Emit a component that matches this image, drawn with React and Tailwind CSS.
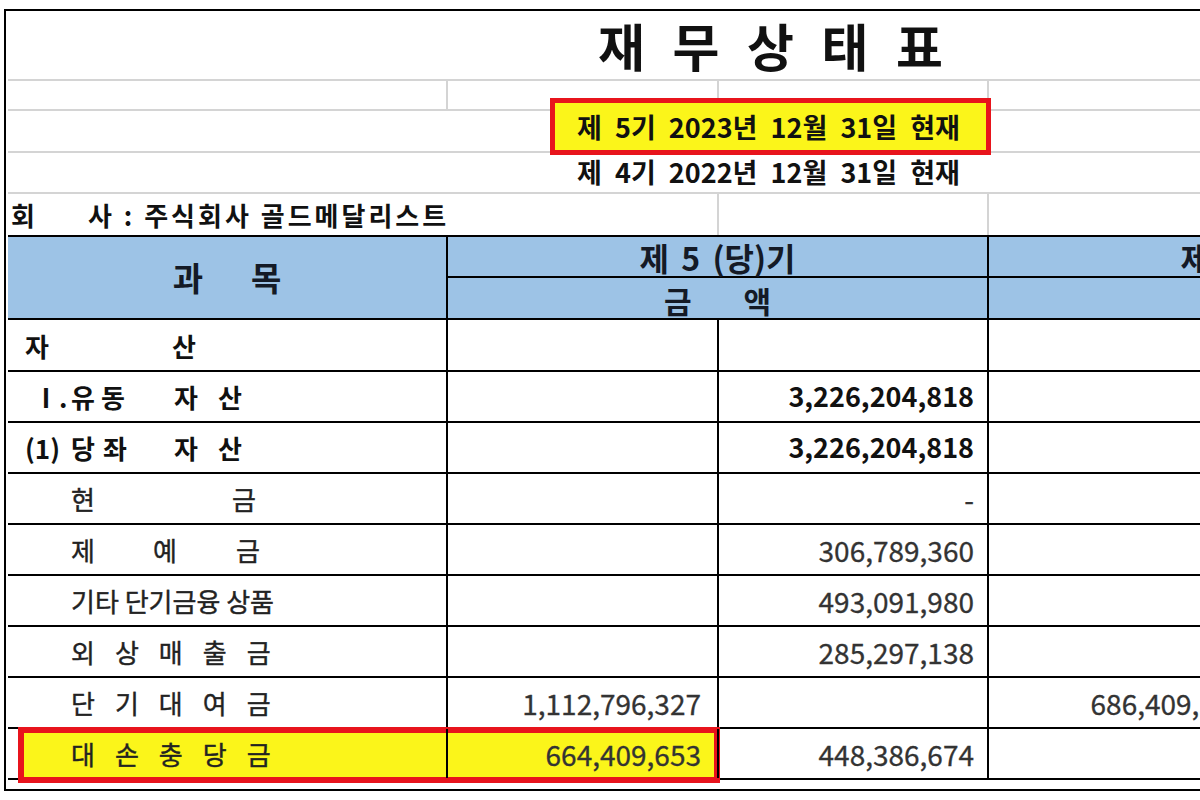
const kr = "font-['Noto_Sans_CJK_KR','Noto_Sans',sans-serif]";

function Label1({ children }) {
  return <span className="inline-flex items-center font-bold text-[26px] text-[#111]">{children}</span>;
}

function Label2({ children, className = "" }) {
  return (
    <span className={`inline-flex items-center text-[26px] text-[#222] [-webkit-text-stroke:0.4px_#222] ${className}`}>
      {children}
    </span>
  );
}

const rows = [
  {
    label: (
      <Label1>
        <span className="inline-block w-[147px]">자</span>
        <span>산</span>
      </Label1>
    ),
  },
  {
    label: (
      <Label1>
        <span className="inline-block w-[38px] ml-[8px]">Ⅰ.</span>
        <span className="inline-block w-[30px]">유</span>
        <span className="inline-block w-[73px]">동</span>
        <span className="inline-block w-[44px]">자</span>
        <span>산</span>
      </Label1>
    ),
    b: "3,226,204,818",
    bold: true,
  },
  {
    label: (
      <Label1>
        <span className="inline-block w-[46px]">(1)</span>
        <span className="inline-block w-[32px]">당</span>
        <span className="inline-block w-[71px]">좌</span>
        <span className="inline-block w-[44px]">자</span>
        <span>산</span>
      </Label1>
    ),
    b: "3,226,204,818",
    bold: true,
  },
  {
    label: (
      <Label2 className="ml-[46px]">
        <span className="inline-block w-[161px]">현</span>
        <span>금</span>
      </Label2>
    ),
    b: "-",
  },
  {
    label: (
      <Label2 className="ml-[46px]">
        <span className="inline-block w-[82px]">제</span>
        <span className="inline-block w-[83px]">예</span>
        <span>금</span>
      </Label2>
    ),
    b: "306,789,360",
  },
  { label: <Label2 className="ml-[46px]">기타 단기금융 상품</Label2>, b: "493,091,980" },
  { label: <Label2 className="ml-[46px] tracking-[20px]">외상매출금</Label2>, b: "285,297,138" },
  { label: <Label2 className="ml-[46px] tracking-[20px]">단기대여금</Label2>, a: "1,112,796,327", c: "686,409,653" },
  { label: <Label2 className="ml-[46px] tracking-[20px]">대손충당금</Label2>, a: "664,409,653", b: "448,386,674", hl: true },
];

function Num({ value, bold }) {
  return (
    <span
      className={
        bold
          ? "text-[27px] font-bold text-[#111]"
          : "text-[28px] text-[#333] [-webkit-text-stroke:0.3px_#333]"
      }
    >
      {value}
    </span>
  );
}

function DataRow({ row, first }) {
  return (
    <div className={`relative flex border-b-2 border-black ${first ? "h-[52px]" : "h-[51px]"}`}>
      {row.hl && (
        <div className="absolute left-[10px] -top-[2px] w-[702px] h-[56px] border-[6px] border-[#e8141c] bg-[#fbf51a]" />
      )}
      <div className="relative w-[440px] shrink-0 border-r-2 border-black flex items-center pl-[17px]">
        {row.label}
      </div>
      <div className="relative w-[271px] shrink-0 border-r-2 border-black flex items-center justify-end pr-[16px]">
        {row.a && <Num value={row.a} bold={row.bold} />}
      </div>
      <div className="relative w-[270px] shrink-0 border-r-2 border-black flex items-center justify-end pr-[13px]">
        {row.b && <Num value={row.b} bold={row.bold} />}
      </div>
      <div className="relative w-[271px] shrink-0 border-r-2 border-black flex items-center justify-end pr-[12px]">
        {row.c && <Num value={row.c} bold={row.bold} />}
      </div>
      <div className="relative w-[270px] shrink-0 border-r-2 border-black" />
    </div>
  );
}

export default function App() {
  return (
    <div className={`w-[1200px] h-[800px] overflow-hidden bg-white ${kr}`}>
      <div className="ml-[4px] mt-[9px] w-[1600px] h-[782px] border-l-2 border-t-2 border-b-2 border-black">
        <div className="ml-[2px]">
          {/* title */}
          <div className="h-[70px] border-b-2 border-[#d4d4d4] flex items-center pl-[590px]">
            <h1 className="text-[51px] font-bold text-[#111] [word-spacing:16px] leading-none">재 무 상 태 표</h1>
          </div>

          <div className="h-[30px] border-b-2 border-[#d4d4d4] flex">
            <div className="w-[440px] shrink-0 border-r-2 border-[#d4d4d4]" />
            <div className="w-[271px] shrink-0 border-r-2 border-[#d4d4d4]" />
            <div className="w-[270px] shrink-0 border-r-2 border-[#d4d4d4]" />
          </div>

          <div className="relative h-[42px] border-b-2 border-[#d4d4d4] flex items-center pl-[569px]">
            <div className="absolute left-[542px] -top-[13px] w-[441px] h-[57px] border-[5px] border-[#e8141c] bg-[#fbf51a]" />
            <span className="relative -mt-[8px] text-[27px] font-bold text-[#111] [word-spacing:7px]">
              제 5기 2023년 12월 31일 현재
            </span>
          </div>

          <div className="h-[41px] border-b-2 border-[#d4d4d4] flex items-center pl-[569px]">
            <span className="text-[27px] font-bold text-[#111] [word-spacing:7px]">제 4기 2022년 12월 31일 현재</span>
          </div>

          <div className="h-[41px] flex">
            <div className="w-[711px] shrink-0 border-r-2 border-[#d4d4d4] flex items-center pl-[3px] text-[26px] font-bold text-[#111]">
              <span className="inline-block w-[77px]">회</span>
              <span className="tracking-[3px]">사 : 주식회사 골드메달리스트</span>
            </div>
            <div className="w-[270px] shrink-0 border-r-2 border-[#d4d4d4]" />
          </div>

          {/* header */}
          <div className="flex h-[85px] border-y-2 border-black bg-[#9dc3e6] text-[#141a26] font-bold">
            <div className="w-[440px] shrink-0 border-r-2 border-black flex items-center justify-center text-[33px]">
              과<span className="ml-[48px]">목</span>
            </div>
            <div className="w-[541px] shrink-0 border-r-2 border-black flex flex-col">
              <div className="h-[41px] border-b-2 border-black flex items-center justify-center text-[32px] [word-spacing:5px]">
                제 5 (당)기
              </div>
              <div className="flex-1 flex items-center justify-center text-[30px]">
                금<span className="ml-[52px]">액</span>
              </div>
            </div>
            <div className="w-[541px] shrink-0 border-r-2 border-black flex flex-col">
              <div className="h-[41px] border-b-2 border-black flex items-center justify-center text-[32px] [word-spacing:5px]">
                제 4 (전)기
              </div>
              <div className="flex-1 flex items-center justify-center text-[30px]">
                금<span className="ml-[52px]">액</span>
              </div>
            </div>
          </div>

          {rows.map((row, i) => (
            <DataRow key={i} row={row} first={i === 0} />
          ))}
        </div>
      </div>
    </div>
  );
}
